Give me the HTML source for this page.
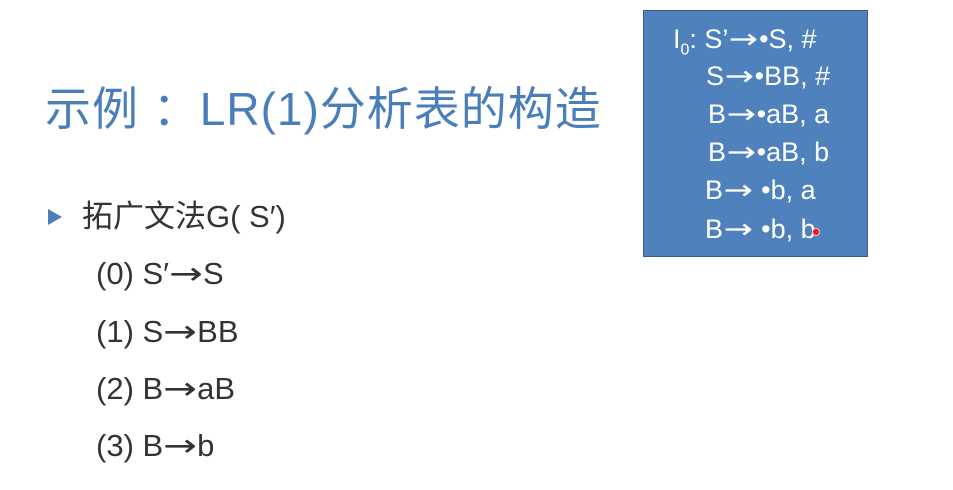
<!DOCTYPE html>
<html><head><meta charset="utf-8"><style>
body{margin:0;width:953px;height:490px;background:#fff;position:relative;overflow:hidden;font-family:"Liberation Sans","Noto Sans CJK SC",sans-serif}
.a{position:absolute;white-space:nowrap;line-height:1}
.t{left:45px;top:86px;font-size:46px;color:#4a7ebb;letter-spacing:1px}
.b{font-size:31px;color:#333}
.box{position:absolute;left:643px;top:10px;width:223px;height:245px;background:#4f81bd;border:1px solid #385d8a}
.bx{font-size:27px;color:#fff}
.ar{font-family:"DejaVu Sans",sans-serif;display:inline-block;transform:scaleX(1.3);margin:0 4px}
.tri{position:absolute;left:48px;top:209px;width:0;height:0;border-top:8px solid transparent;border-bottom:8px solid transparent;border-left:14px solid #4a7ebb}
</style></head><body>
<div class="a t">示例 ：LR(1)分析表的构造</div>
<div class="tri"></div>
<div class="a b" style="left:82px;top:201px">拓广文法G( S′)</div>
<div class="a b" style="left:96px;top:258px">(0) S′<span class="ar">→</span>S</div>
<div class="a b" style="left:96px;top:316px">(1) S<span class="ar">→</span>BB</div>
<div class="a b" style="left:96px;top:373px">(2) B<span class="ar">→</span>aB</div>
<div class="a b" style="left:96px;top:430px">(3) B<span class="ar">→</span>b</div>
<div class="box"></div>
<div class="a bx" style="left:673px;top:26px">I<sub style="font-size:16px">0</sub>: S’<span class="ar">→</span>•S, #</div>
<div class="a bx" style="left:706px;top:63px">S<span class="ar">→</span>•BB, #</div>
<div class="a bx" style="left:708px;top:101px">B<span class="ar">→</span>•aB, a</div>
<div class="a bx" style="left:708px;top:139px">B<span class="ar">→</span>•aB, b</div>
<div class="a bx" style="left:705px;top:177px">B<span class="ar">→</span> •b, a</div>
<div class="a bx" style="left:705px;top:216px">B<span class="ar">→</span> •b, b</div>
<div style="position:absolute;left:812px;top:228px;width:6px;height:6px;border-radius:50%;background:#e02020;border:1px solid #fbb"></div>
</body></html>
